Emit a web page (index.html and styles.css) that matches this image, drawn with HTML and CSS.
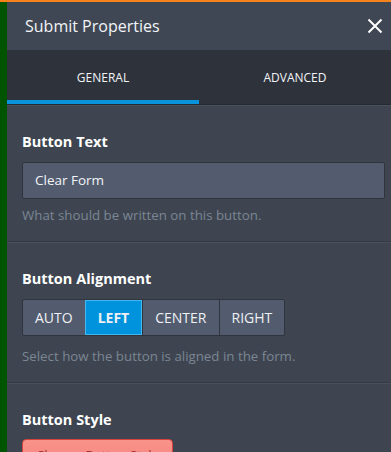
FILE: index.html
```html
<!DOCTYPE html>
<html lang="en">
<head>
  <meta charset="UTF-8">
  <meta name="viewport" content="width=device-width, initial-scale=1.0">
  <title>Submit Properties</title>
  <link rel="stylesheet" href="styles.css">
</head>
<body>
  <div class="page">
    <div class="edge"></div>

    <div class="panel">
      <header class="panel-head">
        <h2>Submit Properties</h2>
        <button class="close" aria-label="Close">
          <svg width="16" height="16" viewBox="0 0 16 16">
            <path d="M1.5 1.5 L14.5 14.5 M14.5 1.5 L1.5 14.5" stroke="#fff" stroke-width="2" fill="none"/>
          </svg>
        </button>
      </header>

      <nav class="tabs">
        <div class="tab active">GENERAL</div>
        <div class="tab">ADVANCED</div>
      </nav>

      <section class="field">
        <div class="label">Button Text</div>
        <div class="input">Clear Form</div>
        <div class="hint">What should be written on this button.</div>
      </section>

      <section class="field">
        <div class="label">Button Alignment</div>
        <div class="segments">
          <div class="seg">AUTO</div>
          <div class="seg on">LEFT</div>
          <div class="seg">CENTER</div>
          <div class="seg">RIGHT</div>
        </div>
        <div class="hint">Select how the button is aligned in the form.</div>
      </section>

      <section class="field">
        <div class="label">Button Style</div>
        <div class="style-btn">Change Button Style</div>
      </section>
    </div>
  </div>
</body>
</html>
```

FILE: styles.css
```css
html, body {
  margin: 0;
  padding: 0;
  height: 100%;
  overflow: hidden;
}

body {
  font-family: 'Open Sans', 'Noto Sans', sans-serif;
  background: #3e4550;
  border-top: 2px solid #f7821b;
  box-sizing: border-box;
}

.page {
  display: flex;
  height: 100%;
}

.edge {
  width: 7px;
  flex: none;
  background: #005400;
}

.panel {
  flex: 1;
  background: #3e4550;
  color: #fff;
}

.panel-head {
  height: 48px;
  background: #404754;
  display: flex;
  align-items: center;
  justify-content: space-between;
  padding: 0 8px 0 18px;
}

.panel-head h2 {
  margin: 0;
  font-size: 16px;
  font-weight: 400;
  color: #f2f4f7;
}

.close {
  background: none;
  border: none;
  padding: 0;
  width: 16px;
  height: 16px;
  display: flex;
}

.tabs {
  display: flex;
  background: #2e323b;
  height: 54px;
  border-bottom: 1px solid #262a31;
}

.tab {
  flex: 1;
  display: flex;
  align-items: center;
  justify-content: center;
  font-size: 12px;
  color: #f2f4f7;
  border-bottom: 4px solid transparent;
  padding-top: 4px;
}

.tab.active {
  border-bottom-color: #0a93dd;
}

.field {
  padding: 26px 6px 16px 15px;
  border-top: 1px solid #4a515d;
  border-bottom: 1px solid #343a44;
}

.label {
  font-size: 14.5px;
  font-weight: 700;
  line-height: 20px;
  margin-bottom: 10px;
}

.input {
  height: 35px;
  line-height: 35px;
  background: #525c6e;
  border: 1px solid #2f343d;
  border-radius: 2px;
  padding: 0 12px;
  font-size: 13.5px;
  color: #f2f4f7;
}

.hint {
  margin-top: 6px;
  font-size: 13.3px;
  line-height: 20px;
  color: #7b8594;
}

.segments {
  display: inline-flex;
  border: 1px solid #2f343d;
  border-radius: 2px;
  background: #525c6e;
  margin-bottom: 4px;
}

.seg {
  height: 35px;
  line-height: 35px;
  padding: 0 12px;
  font-size: 14px;
  color: #eef0f4;
  border-left: 1px solid #2f343d;
}

.seg:first-child {
  border-left: none;
}

.seg.on {
  background: #0093dd;
  border: 1px solid #45b8f0;
  height: 33px;
  line-height: 33px;
  font-weight: 700;
}

.style-btn {
  display: inline-block;
  width: 149px;
  height: 32px;
  line-height: 30px;
  margin-top: -1px;
  background: linear-gradient(#f9938a, #f4837a);
  border: 1px solid #d5443c;
  border-radius: 4px;
  text-align: center;
  font-size: 13px;
  color: #a3302a;
}
```
